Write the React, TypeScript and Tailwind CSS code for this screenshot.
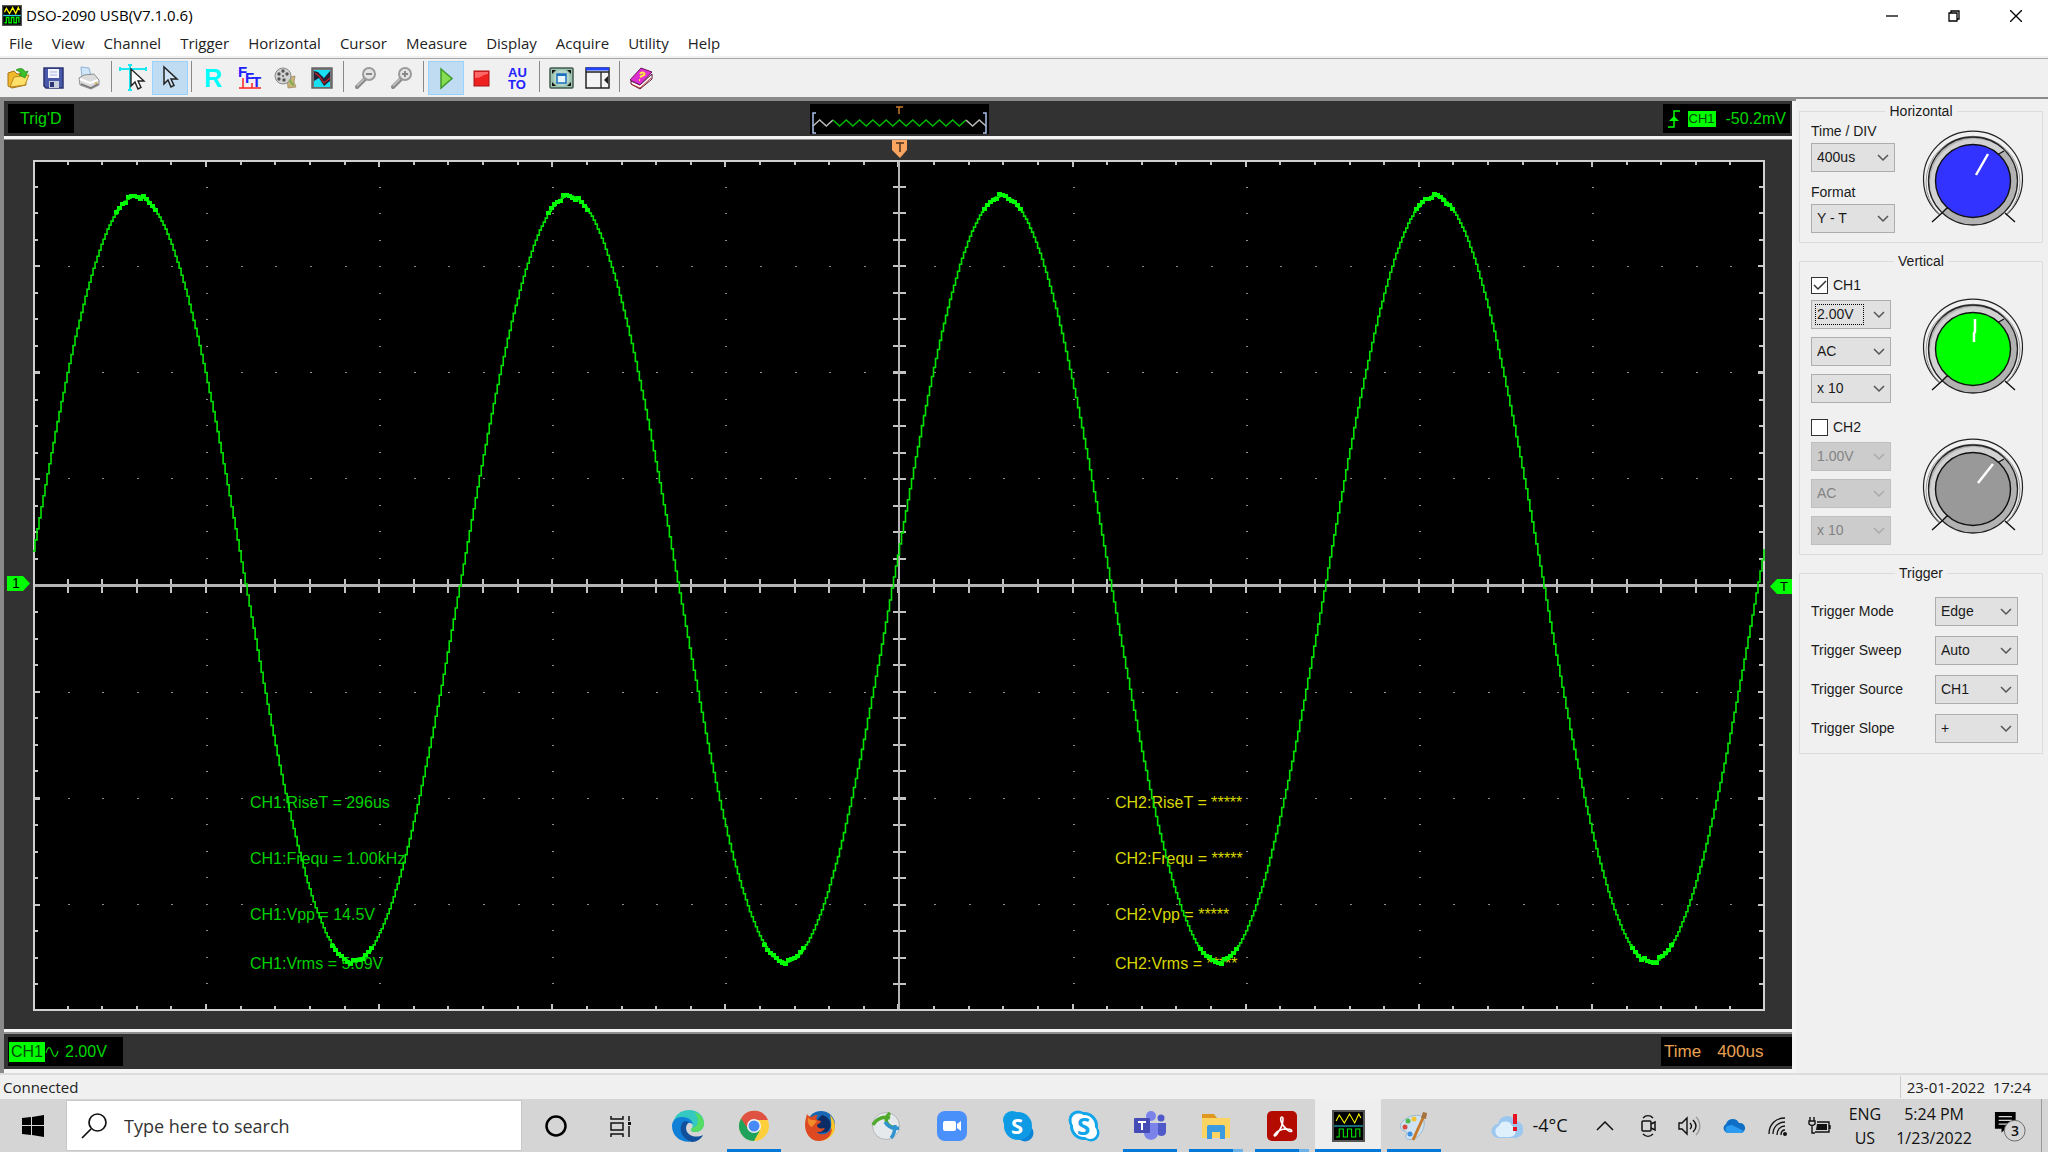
import type { ReactNode } from 'react';

const menuItems = ['File', 'View', 'Channel', 'Trigger', 'Horizontal', 'Cursor', 'Measure', 'Display', 'Acquire', 'Utility', 'Help'];

const ch1Measures = ['CH1:RiseT = 296us', 'CH1:Frequ = 1.00kHz', 'CH1:Vpp = 14.5V', 'CH1:Vrms = 5.09V'];
const ch2Measures = ['CH2:RiseT = *****', 'CH2:Frequ = *****', 'CH2:Vpp = *****', 'CH2:Vrms = *****'];

// graticule: 10 x 8 divisions, 5 and 4 subdivisions each
const W = 1731;
const H = 849;
const subX = W / 50;
const subY = H / 32;

const range = (n: number) => Array.from({ length: n }, (_, i) => i);

function ticksPath() {
    const mid = H / 2;
    let d = '';
    for (const i of range(49)) {
        const x = Math.round((i + 1) * subX);
        const major = (i + 1) % 5 === 0;
        d += `M${x} 0v${major ? 7 : 5}M${x} ${H}v${major ? -7 : -5}M${x} ${mid - 6}v13`;
    }
    for (const i of range(31)) {
        const y = Math.round((i + 1) * subY);
        const major = (i + 1) % 4 === 0;
        d += `M0 ${y}h${major ? 7 : 5}M${W} ${y}h${major ? -7 : -6}M${W / 2 - 6} ${y}h13`;
    }
    return d;
}

function dotsPath() {
    let d = '';
    for (const r of range(7)) {
        for (const i of range(49)) d += `M${Math.round((i + 1) * subX)} ${Math.round((r + 1) * subY * 4)}h2`;
    }
    for (const c of range(9)) {
        for (const i of range(31)) d += `M${Math.round((c + 1) * subX * 5)} ${Math.round((i + 1) * subY)}h2`;
    }
    return d;
}

const level = (x: number) => 418 - 382 * Math.cos(((x - 103) / 432.4) * Math.PI * 2);

function wavePath() {
    let d = `M0 ${Math.round(level(0))}`;
    for (let x = 2; x <= W; x += 2) d += `H${x}V${Math.round(level(x))}`;
    return d;
}

function crestPath() {
    let d = '';
    for (let x = 2; x <= W; x += 3) {
        const c = Math.abs(Math.cos(((x - 103) / 432.4) * Math.PI * 2));
        if (c > 0.955) d += `M${x - 2} ${Math.round(level(x)) + (c > 0.985 ? ((x * 7) % 5) - 2 : 0)}h5`;
    }
    return d;
}

function ScopeIcon({ className, stroke = 1.6 }: { className: string; stroke?: number }) {
    return (
        <svg viewBox="0 0 32 32" preserveAspectRatio="none" className={className}>
            <rect x="1" y="1" width="30" height="30" fill="#000" stroke="#555" strokeWidth="2" />
            <g fill="none" strokeWidth={stroke}>
                <path d="M4 11l3-6 5 8 5-9 5 9 4-9 2 4" stroke="#ff0" />
                <path d="M2 16h28" stroke="#2bd0e8" />
                <path d="M4 27h3v-8h4v8h4v-8h4v8h4v-8h4v8" stroke="#0e0" />
            </g>
        </svg>
    );
}

function Tool({ label, active, children }: { label: string; active?: boolean; children: ReactNode }) {
    return (
        <button
            aria-label={label}
            className={`flex h-[34px] w-9 items-center justify-center border ${active ? 'border-[#99d1ff] bg-[#c0dcf3]' : 'border-transparent'}`}
        >
            <svg viewBox="0 0 24 24" className="h-6 w-6 overflow-visible">{children}</svg>
        </button>
    );
}

const ToolDivider = () => <div className="ml-[3px] mr-1 h-[31px] w-px bg-[#888]" />;

const arrow = 'M0 0v17l4-4 3 7 3-1.500-3-6.500h6z';

function Magnifier({ plus }: { plus?: boolean }) {
    return (
        <>
            <path d="M11 13l-8 8" stroke="#8a8a8a" strokeWidth="4" strokeLinecap="round" />
            <path d="M10 13l-7 7" stroke="#c6c6c6" strokeWidth="1.500" />
            <circle cx="15" cy="8" r="6" fill="#e4e4e4" stroke="#9a9a9a" strokeWidth="2" />
            <path d={plus ? 'M12 8h6M15 5v6' : 'M12 8h6'} stroke="#888" strokeWidth="2" />
        </>
    );
}

function Toolbar() {
    return (
        <div className="flex h-[39px] items-start border-t border-[#a8a8a8] bg-[#f0f0f0] pt-0.5">
            <Tool label="Open">
                <path d="M2 7l6-2 3 3 8-1 1 12-14 3-4-2z" fill="#f2b92b" stroke="#a8741a" />
                <path d="M4 21l4-10 15-2-4 10z" fill="#ffe16a" stroke="#b98a20" />
                <path d="M10 4c5-3 8-1 9 2l3-1-3 7-6-3 2-1c-1-2-2-3-5-4z" fill="#3cc02c" stroke="#228a18" strokeWidth=".7" />
            </Tool>
            <Tool label="Save">
                <path d="M2 2h19v20H4l-2-2z" fill="#4a5aa8" stroke="#2b3573" strokeWidth="1.500" />
                <path d="M6 3h11v9H6z" fill="#f4f6ff" />
                <path d="M8 6h7M8 9h7" stroke="#a9b2d8" />
                <path d="M7 15h10v7H7z" fill="#c9cfdd" />
                <path d="M8 16h4v5H8z" fill="#2b3573" />
            </Tool>
            <Tool label="Print">
                <path d="M3 1l8 1 2 8-9 2z" fill="#cfe6fb" stroke="#8fb3d6" />
                <path d="M1 12l5-3 10-1 5 6v5l-8 4-11-4z" fill="#dcdcdc" stroke="#8f8f8f" />
                <path d="M2 13l10 4 8-3" fill="none" stroke="#fff" strokeWidth="2" />
                <path d="M3 18l10 4 7-4" fill="none" stroke="#777" strokeWidth="1.500" />
                <circle cx="18" cy="17" r="1" fill="#da2" />
            </Tool>
            <ToolDivider />
            <Tool label="Cross cursor">
                <path d="M-2 3h26M-2 1v4M24 1v4M8-1v26M6-1h4M6 24h4" stroke="#1ce6f0" strokeWidth="2" />
                <path d={arrow} transform="translate(9 3)" fill="#fff" stroke="#222" strokeWidth="1.400" />
            </Tool>
            <Tool label="Select" active>
                <path d={arrow} transform="translate(6 1)" fill="#cfe4f7" stroke="#222" strokeWidth="1.500" />
            </Tool>
            <ToolDivider />
            <Tool label="Reference">
                <text x="2" y="21" fontSize="25" fontWeight="700" fill="#0ff" className="font-['Liberation_Sans']">R</text>
            </Tool>
            <Tool label="FFT">
                <g fill="#22f" fontWeight="700" fontSize="15" className="font-['Liberation_Sans']">
                    <text x="0" y="11">F</text>
                    <text x="7" y="17">F</text>
                    <text x="14" y="21">T</text>
                </g>
                <path d="M1 22h22M5 22V12M14 22v-5" stroke="#f22" strokeWidth="1.500" />
            </Tool>
            <Tool label="Record">
                <path d="M13 12l8-2-1 6 2 5-8 1z" fill="#c9b27c" stroke="#9a8455" strokeWidth=".7" />
                <circle cx="9" cy="10" r="8" fill="#d2d2d2" stroke="#8a8a8a" />
                <g fill="#555">
                    <circle cx="9" cy="5" r="1.700" /><circle cx="5" cy="8" r="1.700" /><circle cx="5" cy="13" r="1.700" />
                    <circle cx="13" cy="8" r="1.700" /><circle cx="10" cy="14" r="1.700" /><circle cx="9" cy="10" r="1" />
                </g>
                <path d="M15 14c3 1 2 5 5 5" stroke="#7fb04c" strokeWidth="2" fill="none" />
            </Tool>
            <Tool label="Pass fail">
                <rect x="2" y="2" width="20" height="20" fill="#777" stroke="#666" strokeWidth="1.500" />
                <path d="M4 4h16v17H4z" fill="#19dff2" />
                <path d="M4 5l4 1 6 6 6-7v10l-6 5-5-8-5 3z" fill="#24223a" />
                <path d="M4 21l5-6 6 6z" fill="#19dff2" />
                <path d="M5 7l4 3 5 7 6-5" fill="none" stroke="#c22" strokeWidth="1.200" />
            </Tool>
            <ToolDivider />
            <Tool label="Zoom out"><Magnifier /></Tool>
            <Tool label="Zoom in"><Magnifier plus /></Tool>
            <ToolDivider />
            <Tool label="Run" active>
                <path d="M7 3l11 9.500L7 22z" fill="#86dd52" stroke="#3f9a2a" strokeWidth="1.500" />
            </Tool>
            <Tool label="Stop">
                <rect x="4" y="5" width="15" height="15" fill="#ee2020" stroke="#a81515" />
                <path d="M5 11V6h13v2c-5 0-6 4-13 4z" fill="#f66" />
            </Tool>
            <Tool label="Auto set">
                <g fill="#22f" fontWeight="700" fontSize="13" className="font-['Liberation_Sans']">
                    <text x="2" y="11">AU</text>
                    <text x="2" y="23">TO</text>
                </g>
            </Tool>
            <ToolDivider />
            <Tool label="Full screen">
                <rect x="0" y="2" width="23" height="20" rx="1" fill="#9cc4b0" stroke="#41594d" strokeWidth="1.500" />
                <path d="M2 8V4h4zM21 8V4h-4zM2 16v4h4zM21 16v4h-4z" fill="#111" />
                <circle cx="11.500" cy="12" r="8" fill="#b6d7c8" />
                <rect x="7" y="8" width="9" height="9" fill="#e8f4fb" stroke="#1d6fc0" strokeWidth="1.500" />
                <path d="M7 9h9" stroke="#1d6fc0" strokeWidth="2" />
            </Tool>
            <Tool label="Side panel">
                <rect x="0" y="2" width="23" height="20" fill="#f4f4f4" stroke="#222" strokeWidth="1.500" />
                <path d="M0 3h23" stroke="#24f" strokeWidth="3" />
                <path d="M0 6h23M15 6v16" stroke="#222" strokeWidth="1.300" />
                <path d="M22 10v8l-4-4z" fill="#222" />
            </Tool>
            <ToolDivider />
            <Tool label="Help">
                <path d="M1 15l9 4 12-11v5L10 23l-9-5z" fill="#fff" stroke="#551133" />
                <path d="M0 14L11 2l11 4-12 13z" fill="#e02fd0" stroke="#6b1560" />
                <path d="M10 8c2-3 6-1 4 1l-4 2M9 14h1" stroke="#ffe640" strokeWidth="2" fill="none" />
                <path d="M1 18l9 4 11-10" stroke="#b33" fill="none" />
            </Tool>
        </div>
    );
}

function TriggerPreview() {
    const zig = (from: number, to: number) => range(to - from + 1).map((i) => `${3 + (from + i) * 6.65},${(from + i) % 2 ? 16 : 22}`).join(' ');
    return (
        <svg viewBox="0 0 179 30" className="h-[30px] w-[179px] bg-black">
            <path d="M6 9H3v20h3M173 9h3v20h-3" fill="none" stroke="#a9c1ea" strokeWidth="1.500" />
            <g fill="none" strokeWidth="1.500">
                <polyline points={zig(0, 3)} stroke="#bbb" />
                <polyline points={zig(3, 23)} stroke="#0b0" />
                <polyline points={zig(23, 26)} stroke="#bbb" />
            </g>
            <path d="M86 3h7M89 3v7" stroke="#c87a2c" strokeWidth="1.500" />
        </svg>
    );
}

function Measures({ lines, className }: { lines: string[]; className: string }) {
    return (
        <ul className={`absolute top-[74.4%] whitespace-pre text-[16px] leading-5 ${className}`}>
            {lines.map((line, i) => (
                <li key={line} className={i === 3 ? '' : i === 2 ? 'mb-[29px]' : 'mb-9'}>{line}</li>
            ))}
        </ul>
    );
}

function Graticule() {
    return (
        <div className="relative flex flex-1 flex-col border-t border-[#909090] bg-[#323232] pb-[18px] pl-[29px] pr-[27px] pt-5">
            <div className="relative flex min-h-[400px] flex-1">
                <svg viewBox={`0 0 ${W} ${H}`} preserveAspectRatio="none" className="absolute inset-0 h-full w-full bg-black" shapeRendering="crispEdges">
                    <path d={dotsPath()} stroke="#8c8c8c" strokeWidth="1" />
                    <path d={ticksPath()} stroke="#c4c4c4" strokeWidth="2" />
                    <path d={`M0 ${H / 2}H${W}M${W / 2} 0V${H}`} stroke="#b4b4b4" strokeWidth="2" />
                    <rect x="0" y="0" width={W} height={H} fill="none" stroke="#d0d0d0" strokeWidth="3" />
                </svg>
                <Measures lines={ch1Measures} className="left-[217px] text-[#00d000]" />
                <Measures lines={ch2Measures} className="left-1/2 ml-[216px] text-[#d8d800]" />
                <svg viewBox={`0 0 ${W} ${H}`} preserveAspectRatio="none" className="absolute inset-0 h-full w-full">
                    <path d={wavePath()} fill="none" stroke="#00e400" strokeWidth="1.600" />
                    <path d={crestPath()} fill="none" stroke="#00ff00" strokeWidth="4" shapeRendering="crispEdges" />
                </svg>
                <svg viewBox="0 0 16 18" className="absolute -top-5 left-1/2 -ml-[7px] h-[18px] w-4">
                    <path d="M0 0h15v10l-7 8-8-8z" fill="#f9a560" />
                    <path d="M4 3h8M8 3v9" stroke="#4a3020" strokeWidth="1.500" />
                </svg>
                <div className="absolute -left-[26px] top-1/2 -mt-2.5 flex h-[15px] w-[23px] text-[14px] leading-[15px]">
                    <svg viewBox="0 0 23 15" className="absolute inset-0"><path d="M0 0h16l7 7.500-7 7.500H0z" fill="#0f0" /></svg>
                    <span className="relative pl-[5px] text-black">1</span>
                </div>
                <div className="absolute -right-[27px] top-1/2 -mt-[7px] flex h-[15px] w-[22px] justify-end text-[13px] leading-[15px]">
                    <svg viewBox="0 0 22 15" className="absolute inset-0"><path d="M22 0H7L0 7.500 7 15h15z" fill="#0f0" /></svg>
                    <span className="relative pr-1 text-black">T</span>
                </div>
            </div>
        </div>
    );
}

function Scope() {
    return (
        <main className="flex min-w-0 flex-1 flex-col gap-[3px] border-l-4 border-t-4 border-[#8a8a8a] bg-[#f4f4f4] pr-1">
            <div className="flex h-[35px] items-center justify-between bg-[#323232] pl-1 pr-0.5">
                <div className="flex h-[29px] w-[179px]">
                    <span className="bg-black px-3 text-[16px] leading-[29px] text-[#00d800]">Trig'D</span>
                </div>
                <TriggerPreview />
                <div className="flex w-[179px] justify-end">
                    <div className="flex h-[29px] items-center bg-black pl-[5px] pr-1 text-[16px] text-[#00d800]">
                        <svg viewBox="0 0 12 20" className="h-5 w-3" fill="none" stroke="#0f0" strokeWidth="1.500">
                            <path d="M0 18h6V2h6" />
                            <path d="M1 12l5-5 5 5z" fill="#0f0" stroke="none" />
                        </svg>
                        <span className="ml-2 mr-2.5 h-4 bg-[#0f0] px-px text-[13px] leading-4 text-[#054a05]">CH1</span>
                        -50.2mV
                    </div>
                </div>
            </div>
            <Graticule />
            <div className="mb-1 flex h-[37px] items-center justify-between border-t-2 border-[#909090] bg-[#323232] pl-1">
                <div className="flex h-[29px] w-[115px] items-center bg-black pl-px text-[16px] text-[#00d800]">
                    <span className="h-5 bg-[#0f0] px-0.5 leading-5 text-[#054a05]">CH1</span>
                    <svg viewBox="0 0 14 14" className="mr-1.5 h-3.5 w-3.5" fill="none" stroke="#0c0" strokeWidth="1.300">
                        <path d="M1 8c2-7 4-7 6-1s4 6 6-1" />
                    </svg>
                    2.00V
                </div>
                <div className="flex h-[29px] w-[131px] items-center gap-4 bg-black pl-[3px] text-[17px] text-[#e9a052]">
                    <span>Time</span>
                    <span>400us</span>
                </div>
            </div>
        </main>
    );
}

type ComboProps = { label: string; value: string; options?: string[]; width: string; disabled?: boolean; focused?: boolean };

function Combo({ label, value, options = [], width, disabled, focused }: ComboProps) {
    return (
        <div className={`relative h-[29px] ${width}`}>
            <select
                id={label}
                aria-label={label}
                defaultValue={value}
                disabled={disabled}
                className="h-full w-full appearance-none border border-[#adadad] bg-[#e1e1e1] pl-[5px] text-[14px] text-[#1a1a1a] opacity-100 outline-none disabled:border-[#bfbfbf] disabled:bg-[#ccc] disabled:text-[#838383]"
            >
                {[value, ...options].map((o) => <option key={o}>{o}</option>)}
            </select>
            {focused && <span className="pointer-events-none absolute left-1 top-1 h-[21px] w-[49px] border border-dotted border-black" />}
            <svg viewBox="0 0 12 8" className="pointer-events-none absolute right-1.5 top-[11px] h-2 w-3">
                <path d="M1 1l5 5 5-5" fill="none" stroke={disabled ? '#aaa' : '#555'} strokeWidth="1.500" />
            </svg>
        </div>
    );
}

function Knob({ color, hand }: { color: string; hand: string }) {
    return (
        <svg viewBox="-52 -48 104 96" className="h-24 w-[104px] overflow-visible">
            <path d="M-33 34A49.500 48 0 1 1 33 34" fill="#f0f0f0" stroke="#222" strokeWidth="1.200" />
            <path d="M-33 34A47 46 0 1 1 33 34" fill="none" stroke="#999" strokeWidth="1" />
            <ellipse rx="44.500" ry="44" fill="#b2b2b2" />
            <path d="M-31 32A44.500 44 0 0 1 31-31z" fill="#d2d2d2" />
            <ellipse rx="44.500" ry="44" fill="none" stroke="#222" strokeWidth="1.300" />
            <path d="M-31 32l5-5h6M24-26l7-4M-31 32l-10 9M32 32l10 9" fill="none" stroke="#111" strokeWidth="1.400" />
            <ellipse rx="37.500" ry="36.500" fill={color} stroke="#111" strokeWidth="1.400" />
            <path d={hand} stroke="#fff" strokeWidth="2.500" fill="none" />
        </svg>
    );
}

function Group({ title, children }: { title: string; children: ReactNode }) {
    return (
        <fieldset className="min-w-0 border border-[#dcdcdc]">
            <legend className="mx-auto px-1 leading-5">{title}</legend>
            {children}
        </fieldset>
    );
}

function ChannelSettings({ name, volts, on }: { name: string; volts: string; on?: boolean }) {
    return (
        <div className="flex flex-col gap-2">
            <label className="-mb-0.5 flex h-[17px] items-center gap-[5px]">
                <input
                    type="checkbox"
                    defaultChecked={on}
                    className="h-[17px] w-[17px] appearance-none border border-[#333] bg-white"
                />
                {on && (
                    <svg viewBox="0 0 17 17" className="pointer-events-none absolute h-[17px] w-[17px]">
                        <path d="M3 8l4 4 8-8" fill="none" stroke="#333" strokeWidth="1.500" />
                    </svg>
                )}
                {name}
            </label>
            <Combo label={`${name} volts per division`} value={volts} width="w-20" disabled={!on} focused={on} />
            <Combo label={`${name} coupling`} value="AC" options={['DC', 'GND']} width="w-20" disabled={!on} />
            <Combo label={`${name} probe`} value="x 10" options={['x 1', 'x 100']} width="w-20" disabled={!on} />
        </div>
    );
}

const triggerRows = [
    ['Trigger Mode', 'Edge'],
    ['Trigger Sweep', 'Auto'],
    ['Trigger Source', 'CH1'],
    ['Trigger Slope', '+'],
];

function SidePanel() {
    return (
        <aside className="flex w-[252px] shrink-0 flex-col gap-2 border-t-2 border-[#8a8a8a] bg-[#f0f0f0] pl-[3px] pr-[5px] pt-0.5 text-[14px] text-[#1a1a1a]">
            <Group title="Horizontal">
                <div className="flex items-start justify-between pb-[9px] pl-[11px] pr-[17px]">
                    <div className="flex flex-col gap-0.5">
                        <label htmlFor="Time per division" className="leading-5">Time / DIV</label>
                        <Combo label="Time per division" value="400us" width="w-[84px]" />
                        <label htmlFor="Display format" className="mt-2 leading-5">Format</label>
                        <Combo label="Display format" value="Y - T" options={['X - Y']} width="w-[84px]" />
                    </div>
                    <div className="pt-3"><Knob color="#3333ff" hand="M3-6L15-27" /></div>
                </div>
            </Group>
            <Group title="Vertical">
                <div className="flex items-start justify-between pb-[9px] pl-[11px] pr-[17px] pt-1.5">
                    <div className="flex flex-col gap-4">
                        <ChannelSettings name="CH1" volts="2.00V" on />
                        <ChannelSettings name="CH2" volts="1.00V" />
                    </div>
                    <div className="flex flex-col gap-11 pt-6">
                        <Knob color="#00ff00" hand="M1-7V-16L2-17V-30" />
                        <Knob color="#999999" hand="M5-6L20-25" />
                    </div>
                </div>
            </Group>
            <Group title="Trigger">
                <div className="flex flex-col gap-2.5 pb-2.5 pl-[11px] pr-6 pt-3.5">
                    {triggerRows.map(([label, value]) => (
                        <div key={label} className="flex items-center justify-between">
                            <label htmlFor={label}>{label}</label>
                            <Combo label={label} value={value} width="w-[83px]" />
                        </div>
                    ))}
                </div>
            </Group>
        </aside>
    );
}

type TaskApp = { name: string; running?: boolean; current?: boolean; stacked?: boolean; icon: ReactNode };

const apps: TaskApp[] = [
    {
        name: 'Cortana',
        icon: <circle cx="16" cy="16" r="9.500" fill="none" stroke="#000" strokeWidth="2.500" />,
    },
    {
        name: 'Task view',
        icon: (
            <g fill="none" stroke="#111" strokeWidth="1.500">
                <path d="M5 6v3h12V6M5 27v-3h12v3M5 13h12v7H5zM23 6v5M23 16v11" />
                <path d="M22 12h3v3h-3z" fill="#111" stroke="none" />
            </g>
        ),
    },
    {
        name: 'Edge',
        icon: (
            <>
                <path d="M1 14C2 5 9 0 17 0c9 0 15 6 15 13 0 6-4 9-9 9-4 0-5-2-3-4 2-3-1-8-6-8-6 0-10 2-13 4z" fill="#35c8c0" />
                <path d="M22 2c7 2 10 7 10 11 0 6-4 9-9 9-4 0-5-2-3-4 7-1 8-9 2-16z" fill="#55dc62" />
                <path d="M0 16c0-6 5-9 10-9 6 0 10 3 11 7-6-3-10 1-10 6 0 6 5 10 11 11C10 34 0 27 0 16z" fill="#0f7fd8" />
                <path d="M11 12c-5 6-2 17 9 20 5 0 9-3 11-7-8 4-17 0-17-7 0-3 2-5 3-6-2-1-5-1-6 0z" fill="#12509c" />
            </>
        ),
    },
    {
        name: 'Chrome',
        running: true,
        icon: (
            <>
                <circle cx="16" cy="16" r="15" fill="#fdd03b" />
                <path d="M16 16L3 8.500A15 15 0 0 0 16 31l6-11z" fill="#1fa25c" />
                <path d="M3 8.500A15 15 0 0 1 30 10H16l-6 9z" fill="#df5140" />
                <circle cx="16" cy="16" r="7" fill="#f4f4f4" />
                <circle cx="16" cy="16" r="5.500" fill="#4a8af4" />
            </>
        ),
    },
    {
        name: 'Firefox',
        icon: (
            <>
                <circle cx="17" cy="15" r="14" fill="#1768b4" />
                <path d="M18 5c9 2 11 12 5 17l-9 1-3-11z" fill="#0c2c66" />
                <path d="M26 5c5 5 6 12 4 17-3 6-9 9-15 9 9-3 15-10 11-26z" fill="#fbc62c" />
                <path d="M3 4c1 2 3 3 5 3 2-2 4-2 6-2-2 2-2 4-1 5l4 1c0 2-3 3-4 4 0 3 3 4 8 3-2 4-6 5-9 4 5 4 12 3 16-4 0 8-6 13-13 13C6 31 1 23 1 15 1 11 2 8 3 4z" fill="#dd4a22" />
                <path d="M4 7c1 3 4 3 6 3l3 1-5 6c-3-1-5-5-4-10z" fill="#f28b2a" />
            </>
        ),
    },
    {
        name: 'AnyConnect',
        icon: (
            <>
                <circle cx="16" cy="16" r="13.500" fill="#e6e9ec" stroke="#b4b7ba" />
                <path d="M3 15C7 8 14 6 20 8M20 3c-6 5-5 12 4 15" fill="none" stroke="#4fa92a" strokeWidth="3.500" />
                <path d="M15 12c4 6 9 7 14 6M25 15c0 6-1 10-4 13" fill="none" stroke="#2f93cf" strokeWidth="3.500" />
            </>
        ),
    },
    {
        name: 'Zoom',
        icon: (
            <>
                <rect x="1" y="1" width="30" height="30" rx="8" fill="#4a90fb" />
                <rect x="7" y="11" width="13" height="10" rx="2" fill="#fff" />
                <path d="M21 14l4-3v10l-4-3z" fill="#fff" />
            </>
        ),
    },
    {
        name: 'Skype',
        icon: (
            <>
                <circle cx="10" cy="10" r="9" fill="#0c9fe6" /><circle cx="23" cy="23" r="8.500" fill="#0a84d8" /><circle cx="16" cy="16" r="14" fill="#0e9ae4" />
                <text x="9" y="24" fontSize="22" fontWeight="700" fill="#fff" className="font-['Open_Sans']">S</text>
            </>
        ),
    },
    {
        name: 'Skype for desktop',
        icon: (
            <>
                <g fill="#fff" stroke="#12a5ea" strokeWidth="3"><circle cx="10" cy="10" r="8" /><circle cx="23" cy="23" r="7" /><circle cx="16" cy="16" r="12.500" /></g>
                <circle cx="11" cy="11" r="7.500" fill="#fff" /><circle cx="22" cy="22" r="7" fill="#fff" />
                <text x="9" y="25" fontSize="24" fontWeight="700" fill="#12a5ea" className="font-['Open_Sans']">S</text>
            </>
        ),
    },
    {
        name: 'Teams',
        running: true,
        icon: (
            <>
                <circle cx="27" cy="8" r="3.500" fill="#5059c9" /><path d="M20 13h12v9c0 5-8 5-9 1z" fill="#5059c9" />
                <circle cx="17" cy="6" r="5" fill="#7b83eb" /><path d="M10 13h14v10c0 9-14 9-14 0z" fill="#7b83eb" />
                <rect x="0" y="8" width="16" height="15" rx="1" fill="#444bb4" />
                <path d="M4 12h8M8 12v8" stroke="#fff" strokeWidth="2" />
            </>
        ),
    },
    {
        name: 'File Explorer',
        running: true,
        stacked: true,
        icon: (
            <>
                <path d="M2 4h12l3 4H2z" fill="#e0971f" /><path d="M2 8h28v20H2z" fill="#fcd462" />
                <path d="M7 29V17q0-2 2-2h14q2 0 2 2v12h-5v-7h-8v7z" fill="#3c9be0" />
            </>
        ),
    },
    {
        name: 'Acrobat',
        running: true,
        stacked: true,
        icon: (
            <>
                <rect x="1" y="1" width="30" height="30" rx="5" fill="#b30b00" />
                <path d="M16 7c-3 0-1 9 7 14 4 2 4-2-2-2-5 0-10 2-12 5-2 2 0 3 2 0 3-4 6-10 6-15 0-1 0-2-1-2z" fill="none" stroke="#fff" strokeWidth="1.600" />
            </>
        ),
    },
    { name: 'DSO-2090', running: true, current: true, icon: <></> },
    {
        name: 'Paint',
        running: true,
        icon: (
            <>
                <path d="M4 12C10 5 22 3 25 8c4 7-2 19-10 21-7 2-9-2-6-5 1-3-4-3-6-5-1-2-1-5 1-7z" fill="#cfe3f3" stroke="#9bb8d0" />
                <circle cx="7" cy="17" r="2.500" fill="#d8493f" /><circle cx="10" cy="11" r="2.500" fill="#4eb84a" /><circle cx="16" cy="9" r="2.500" fill="#f1c232" /><circle cx="12" cy="24" r="2.500" fill="#3f8fe0" />
                <path d="M15 30L25 8" stroke="#c77b2a" strokeWidth="3" /><path d="M23 8l2-6 4 1-1 6z" fill="#a5713f" />
            </>
        ),
    },
];

function TaskbarApp({ app }: { app: TaskApp }) {
    return (
        <button aria-label={app.name} className={`flex h-full w-[66px] flex-col items-center ${app.current ? 'bg-[#eeeeee]' : ''}`}>
            <span className="flex flex-1 items-center">
                {app.current ? <ScopeIcon className="h-8 w-[33px]" stroke={1} /> : <svg viewBox="0 0 32 32" className="h-8 w-8">{app.icon}</svg>}
            </span>
            {app.running && (
                <span className={`-mt-[3px] flex h-[3px] bg-[#0078d7] ${app.current ? 'w-full' : 'w-[54px]'}`}>
                    {app.stacked && <span className="ml-auto w-2.5 bg-[#6db3e8]" />}
                </span>
            )}
        </button>
    );
}

function Tray() {
    return (
        <div className="ml-auto flex h-full items-center text-[16px] text-[#111]">
            <svg viewBox="0 0 32 26" className="h-[26px] w-8">
                <path d="M8 25a7 7 0 0 1-1-14A9 9 0 0 1 24 8a8 8 0 0 1 0 17z" fill="#9cc7ee" />
                <path d="M8 24a6 6 0 0 1 0-11 7 7 0 0 1 13 0c5 2 5 11-2 11z" fill="#dff0fd" />
                <path d="M24 1v10M24 14v4" stroke="#e81123" strokeWidth="4" />
            </svg>
            <span className="ml-2.5 text-[18px]">-4°C</span>
            <svg viewBox="0 0 18 10" className="ml-7 h-2.5 w-[18px]"><path d="M1 9l8-8 8 8" fill="none" stroke="#111" strokeWidth="1.500" /></svg>
            <svg viewBox="0 0 18 22" className="ml-[26px] h-[22px] w-[18px]" fill="none" stroke="#111" strokeWidth="1.500">
                <rect x="2" y="6" width="9" height="10" rx="1" /><path d="M11 9l4-2v8l-4-2M3 3c3-3 7-3 10 0M3 19c3 3 7 3 10 0" />
            </svg>
            <svg viewBox="0 0 24 20" className="ml-5 h-5 w-6" fill="none" stroke="#111" strokeWidth="1.400">
                <path d="M1 7h3l5-5v16l-5-5H1zM12 7c2 2 2 4 0 6M15 4c4 4 4 8 0 12" /><path d="M18 1c5 5 5 13 0 18" stroke="#999" />
            </svg>
            <svg viewBox="0 0 24 16" className="ml-5 h-4 w-6">
                <path d="M5 15a5 5 0 0 1-1-9A7 7 0 0 1 17 5a5 5 0 0 1 2 10z" fill="#0f6fc6" /><path d="M5 15a5 5 0 0 1 0-7l5-1 12 6c-1 2-2 2-3 2z" fill="#2a9bee" />
            </svg>
            <svg viewBox="0 0 20 20" className="ml-[22px] h-5 w-5" fill="none" stroke="#111" strokeWidth="1.400">
                <path d="M1 18C1 8 8 2 17 2M5 18C5 11 10 6 17 6M9 19c0-5 3-9 8-9M13 19c0-3 1-5 4-5" /><circle cx="17" cy="18" r="2" fill="#111" stroke="none" />
            </svg>
            <svg viewBox="0 0 24 18" className="ml-5 h-[18px] w-6" fill="none" stroke="#111" strokeWidth="1.400">
                <path d="M2 0v4M6 0v4M1 4h6v3q-3 3-6 0zM4 8v8h3M9 5h12v10H7M22 8v4" /><path d="M9 7h10v6H8z" fill="#111" stroke="none" />
            </svg>
            <div className="ml-[17px] text-center leading-6">ENG<br />US</div>
            <div className="ml-[15px] text-center leading-6">5:24 PM<br />1/23/2022</div>
            <button aria-label="Notifications" className="relative ml-[22px] h-8 w-8">
                <svg viewBox="0 0 34 34" className="h-8 w-8 overflow-visible">
                    <path d="M1 2h22v18H13l-5 4v-4H1z" fill="#000" /><path d="M5 7h14M5 11h14M5 15h9" stroke="#d5d5d5" strokeWidth="1.500" />
                    <circle cx="22" cy="22" r="11" fill="#d5d5d5" stroke="#666" />
                </svg>
                <span className="absolute left-[11px] top-[11px] w-5 text-center text-[14px] font-semibold leading-5">3</span>
            </button>
            <div className="ml-[15px] h-full w-[7px] border-l border-[#9a9a9a]" />
        </div>
    );
}

export default function App() {
    return (
        <div className="flex min-h-screen flex-col overflow-hidden bg-[#f0f0f0] font-['Open_Sans',sans-serif] text-black">
            <header className="flex h-[31px] items-center bg-white pl-0.5 text-[15px]">
                <ScopeIcon className="mr-1 h-[21px] w-5" stroke={2} />
                <h1>DSO-2090 USB(V7.1.0.6)</h1>
                <div className="ml-auto flex gap-[50px] pr-[26px]">
                    <button aria-label="Minimize"><svg viewBox="0 0 12 12" className="h-3 w-3"><path d="M0 6h12" stroke="#000" strokeWidth="1.300" /></svg></button>
                    <button aria-label="Restore">
                        <svg viewBox="0 0 12 12" className="h-3 w-3" fill="none" stroke="#000" strokeWidth="1.300"><path d="M1 3h8v8H1zM3 3V1h8v8H9" /></svg>
                    </button>
                    <button aria-label="Close"><svg viewBox="0 0 12 12" className="h-3 w-3"><path d="M0 0l12 12M12 0L0 12" stroke="#000" strokeWidth="1.300" /></svg></button>
                </div>
            </header>
            <nav className="flex h-[27px] items-start gap-[19px] border-b-2 border-[#f0f0f0] bg-white pl-[9px] text-[15px] leading-[25px] text-[#222]">
                {menuItems.map((item) => <button key={item}>{item}</button>)}
            </nav>
            <Toolbar />
            <div className="flex flex-1 font-['Liberation_Sans',sans-serif]">
                <Scope />
                <SidePanel />
            </div>
            <footer className="flex h-[26px] items-center justify-between border-t-2 border-[#dcdcdc] pl-[3px] pr-[17px] text-[15px] text-[#222]">
                <span>Connected</span>
                <span className="whitespace-pre border-l border-[#ccc] pl-1.5">23-01-2022  17:24</span>
            </footer>
            <div className="flex h-[53px] items-center bg-[#d5d5d5]">
                <button aria-label="Start" className="flex w-[66px] justify-center">
                    <svg viewBox="0 0 22 22" className="h-[22px] w-[22px]"><path d="M0 3l9-1v8H0zM10 2l12-2v10H10zM0 11h9v9l-9-1zM10 11h12v11l-12-2z" /></svg>
                </button>
                <label className="mr-px flex h-[51px] w-[456px] items-center border border-[#c8c8c8] bg-white pl-3.5">
                    <svg viewBox="0 0 26 26" className="h-[26px] w-[26px]" fill="none" stroke="#111" strokeWidth="1.700"><circle cx="16.500" cy="9.500" r="8.500" /><path d="M10 16L1 25" /></svg>
                    <input aria-label="Search" placeholder="Type here to search" className="ml-[17px] flex-1 pt-0.5 text-[18px] outline-none placeholder:text-[#333]" />
                </label>
                {apps.map((app) => <TaskbarApp key={app.name} app={app} />)}
                <Tray />
            </div>
        </div>
    );
}
